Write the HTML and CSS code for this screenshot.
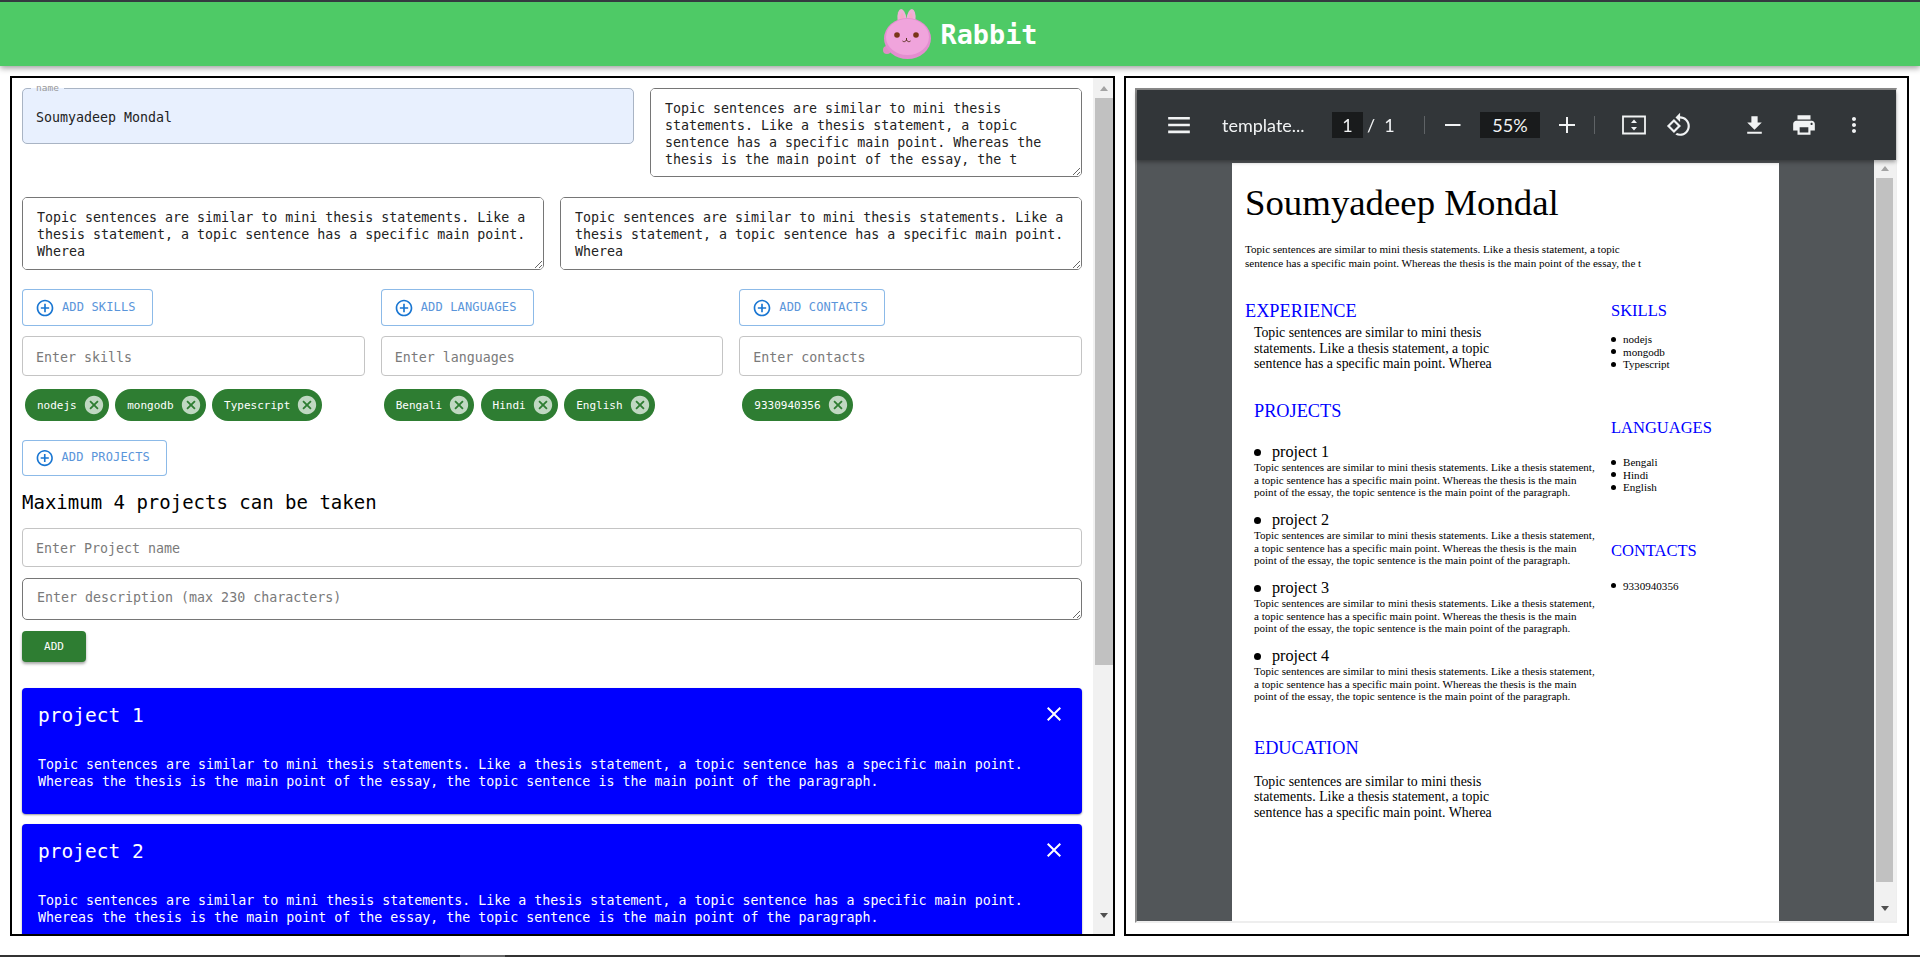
FILE: index.html
```html
<!DOCTYPE html>
<html lang="en">
<head>
    <meta charset="UTF-8">
    <meta name="viewport" content="width=device-width, initial-scale=1.0">
    <title>Rabbit</title>
    <link rel="stylesheet" href="styles.css">
</head>
<body>

<header class="navbar">
    <svg class="logo" viewBox="0 0 50 54">
        <ellipse cx="19" cy="12" rx="4.500" ry="10" transform="rotate(-6 19 12)" fill="#eeb0d6"/>
        <ellipse cx="28" cy="12" rx="4.500" ry="10" transform="rotate(6 28 12)" fill="#eeb0d6"/>
        <ellipse cx="19" cy="13" rx="2" ry="7" fill="#f7a8c8"/>
        <ellipse cx="28" cy="13" rx="2" ry="7" fill="#f7a8c8"/>
        <circle cx="4" cy="43" r="4" fill="#e08cc6"/>
        <ellipse cx="24.500" cy="31.500" rx="23.500" ry="20.500" fill="#e48ed0"/>
        <ellipse cx="24.500" cy="30" rx="21.500" ry="18" fill="#f0a4dc"/>
        <circle cx="14" cy="28" r="2.800" fill="#7a3518"/>
        <circle cx="33" cy="28" r="2.800" fill="#7a3518"/>
        <path d="M23.500 31v2M23.500 33c-1 2-3 2-4 1M23.500 33c1 2 3 2 4 1" fill="none" stroke="#5c3020" stroke-width="1"/>
    </svg>
    <span class="brand">Rabbit</span>
</header>

<main class="workspace">
    <section class="panel panel-form">
        <div class="form-scroll">
            <div class="row-top">
                <fieldset class="name-field">
                    <legend>name</legend>
                    <input type="text" value="Soumyadeep Mondal">
                </fieldset>
                <textarea rows="4">Topic sentences are similar to mini thesis statements. Like a thesis statement, a topic sentence has a specific main point. Whereas the thesis is the main point of the essay, the t</textarea>
            </div>

            <div class="row-two">
                <textarea rows="3">Topic sentences are similar to mini thesis statements. Like a thesis statement, a topic sentence has a specific main point. Wherea</textarea>
                <textarea rows="3">Topic sentences are similar to mini thesis statements. Like a thesis statement, a topic sentence has a specific main point. Wherea</textarea>
            </div>

            <div class="row-three">
                <div class="col">
                    <button class="btn-outline">
                        <svg viewBox="0 0 24 24"><path d="M13 7h-2v4H7v2h4v4h2v-4h4v-2h-4V7zm-1-5C6.49 2 2 6.49 2 12s4.49 10 10 10 10-4.49 10-10S17.51 2 12 2zm0 18c-4.41 0-8-3.59-8-8s3.59-8 8-8 8 3.59 8 8-3.59 8-8 8z"/></svg>
                        Add skills
                    </button>
                    <input class="field" type="text" placeholder="Enter skills">
                    <div class="chips">
                        <span class="chip">nodejs<svg viewBox="0 0 24 24"><path d="M12 2C6.47 2 2 6.47 2 12s4.47 10 10 10 10-4.47 10-10S17.53 2 12 2zm5 13.59L15.59 17 12 13.41 8.41 17 7 15.59 10.59 12 7 8.41 8.41 7 12 10.59 15.59 7 17 8.41 13.41 12 17 15.59z"/></svg></span>
                        <span class="chip">mongodb<svg viewBox="0 0 24 24"><path d="M12 2C6.47 2 2 6.47 2 12s4.47 10 10 10 10-4.47 10-10S17.53 2 12 2zm5 13.59L15.59 17 12 13.41 8.41 17 7 15.59 10.59 12 7 8.41 8.41 7 12 10.59 15.59 7 17 8.41 13.41 12 17 15.59z"/></svg></span>
                        <span class="chip">Typescript<svg viewBox="0 0 24 24"><path d="M12 2C6.47 2 2 6.47 2 12s4.47 10 10 10 10-4.47 10-10S17.53 2 12 2zm5 13.59L15.59 17 12 13.41 8.41 17 7 15.59 10.59 12 7 8.41 8.41 7 12 10.59 15.59 7 17 8.41 13.41 12 17 15.59z"/></svg></span>
                    </div>
                </div>
                <div class="col">
                    <button class="btn-outline">
                        <svg viewBox="0 0 24 24"><path d="M13 7h-2v4H7v2h4v4h2v-4h4v-2h-4V7zm-1-5C6.49 2 2 6.49 2 12s4.49 10 10 10 10-4.49 10-10S17.51 2 12 2zm0 18c-4.41 0-8-3.59-8-8s3.59-8 8-8 8 3.59 8 8-3.59 8-8 8z"/></svg>
                        Add languages
                    </button>
                    <input class="field" type="text" placeholder="Enter languages">
                    <div class="chips">
                        <span class="chip">Bengali<svg viewBox="0 0 24 24"><path d="M12 2C6.47 2 2 6.47 2 12s4.47 10 10 10 10-4.47 10-10S17.53 2 12 2zm5 13.59L15.59 17 12 13.41 8.41 17 7 15.59 10.59 12 7 8.41 8.41 7 12 10.59 15.59 7 17 8.41 13.41 12 17 15.59z"/></svg></span>
                        <span class="chip">Hindi<svg viewBox="0 0 24 24"><path d="M12 2C6.47 2 2 6.47 2 12s4.47 10 10 10 10-4.47 10-10S17.53 2 12 2zm5 13.59L15.59 17 12 13.41 8.41 17 7 15.59 10.59 12 7 8.41 8.41 7 12 10.59 15.59 7 17 8.41 13.41 12 17 15.59z"/></svg></span>
                        <span class="chip">English<svg viewBox="0 0 24 24"><path d="M12 2C6.47 2 2 6.47 2 12s4.47 10 10 10 10-4.47 10-10S17.53 2 12 2zm5 13.59L15.59 17 12 13.41 8.41 17 7 15.59 10.59 12 7 8.41 8.41 7 12 10.59 15.59 7 17 8.41 13.41 12 17 15.59z"/></svg></span>
                    </div>
                </div>
                <div class="col">
                    <button class="btn-outline">
                        <svg viewBox="0 0 24 24"><path d="M13 7h-2v4H7v2h4v4h2v-4h4v-2h-4V7zm-1-5C6.49 2 2 6.49 2 12s4.49 10 10 10 10-4.49 10-10S17.51 2 12 2zm0 18c-4.41 0-8-3.59-8-8s3.59-8 8-8 8 3.59 8 8-3.59 8-8 8z"/></svg>
                        Add contacts
                    </button>
                    <input class="field" type="text" placeholder="Enter contacts">
                    <div class="chips">
                        <span class="chip">9330940356<svg viewBox="0 0 24 24"><path d="M12 2C6.47 2 2 6.47 2 12s4.47 10 10 10 10-4.47 10-10S17.53 2 12 2zm5 13.59L15.59 17 12 13.41 8.41 17 7 15.59 10.59 12 7 8.41 8.41 7 12 10.59 15.59 7 17 8.41 13.41 12 17 15.59z"/></svg></span>
                    </div>
                </div>
            </div>

            <button class="btn-outline btn-projects">
                <svg viewBox="0 0 24 24"><path d="M13 7h-2v4H7v2h4v4h2v-4h4v-2h-4V7zm-1-5C6.49 2 2 6.49 2 12s4.49 10 10 10 10-4.49 10-10S17.51 2 12 2zm0 18c-4.41 0-8-3.59-8-8s3.59-8 8-8 8 3.59 8 8-3.59 8-8 8z"/></svg>
                Add projects
            </button>
            <h3 class="max-note">Maximum 4 projects can be taken</h3>
            <input class="field field-project" type="text" placeholder="Enter Project name">
            <textarea class="desc-input" rows="1" placeholder="Enter description (max 230 characters)"></textarea>
            <button class="btn-add">Add</button>

            <div class="card">
                <div class="card-head">
                    <span>project 1</span>
                    <svg viewBox="0 0 24 24"><path d="M19 6.41 17.59 5 12 10.59 6.41 5 5 6.41 10.59 12 5 17.59 6.41 19 12 13.41 17.59 19 19 17.59 13.41 12z"/></svg>
                </div>
                <p>Topic sentences are similar to mini thesis statements. Like a thesis statement, a topic sentence has a specific main point. Whereas the thesis is the main point of the essay, the topic sentence is the main point of the paragraph.</p>
            </div>
            <div class="card">
                <div class="card-head">
                    <span>project 2</span>
                    <svg viewBox="0 0 24 24"><path d="M19 6.41 17.59 5 12 10.59 6.41 5 5 6.41 10.59 12 5 17.59 6.41 19 12 13.41 17.59 19 19 17.59 13.41 12z"/></svg>
                </div>
                <p>Topic sentences are similar to mini thesis statements. Like a thesis statement, a topic sentence has a specific main point. Whereas the thesis is the main point of the essay, the topic sentence is the main point of the paragraph.</p>
            </div>
        </div>
        <div class="scrollbar form-bar">
            <i class="arrow-up"></i>
            <div class="thumb"></div>
            <i class="arrow-down"></i>
        </div>
    </section>

    <section class="panel panel-preview">
        <div class="viewer">
            <div class="toolbar">
                <svg class="tb-menu" viewBox="0 0 24 24"><path d="M2 4.500h20v2.400H2zM2 10.800h20v2.400H2zM2 17.100h20v2.400H2z"/></svg>
                <span class="tb-title">template...</span>
                <span class="tb-box tb-page">1</span>
                <span class="tb-count">/&nbsp;&nbsp;1</span>
                <span class="tb-sep sep-one"></span>
                <svg class="tb-minus" viewBox="0 0 16 16"><path d="M0 7h15.500v2H0z"/></svg>
                <span class="tb-box tb-zoom">55%</span>
                <svg class="tb-plus" viewBox="0 0 16 16"><path d="M7 0h2v7h7v2H9v7H7V9H0V7h7z"/></svg>
                <span class="tb-sep sep-two"></span>
                <svg class="tb-fit" viewBox="0 0 24 20"><path d="M1 1.500h22v17H1z" fill="none" stroke="#f1f3f4" stroke-width="1.800"/><path d="M12 4.500l3 3.500H9zM12 15.500l-3-3.500h6z"/></svg>
                <svg class="tb-rotate" viewBox="0 0 24 24"><path d="M7.340 6.410L.86 12.900l6.490 6.480 6.490-6.480-6.500-6.490zM3.690 12.900l3.660-3.660L11 12.900l-3.660 3.660-3.650-3.660zm15.670-6.260C17.610 4.880 15.300 4 13 4V.76L8.760 5 13 9.240V6c1.790 0 3.580.68 4.950 2.050 2.730 2.730 2.730 7.170 0 9.900C16.580 19.320 14.790 20 13 20c-.97 0-1.940-.21-2.840-.61l-1.490 1.490C10.020 21.620 11.510 22 13 22c2.300 0 4.610-.88 6.360-2.640 3.520-3.510 3.520-9.210 0-12.720z"/></svg>
                <svg class="tb-download" viewBox="0 0 24 24"><path d="M19 9h-4V3H9v6H5l7 7 7-7zM5 18v2h14v-2H5z"/></svg>
                <svg class="tb-print" viewBox="0 0 24 24"><path d="M19 8H5c-1.660 0-3 1.340-3 3v6h4v4h12v-4h4v-6c0-1.660-1.340-3-3-3zm-3 11H8v-5h8v5zm3-7c-.55 0-1-.45-1-1s.45-1 1-1 1 .45 1 1-.45 1-1 1zm-1-9H6v4h12V3z"/></svg>
                <svg class="tb-more" viewBox="0 0 24 24"><path d="M12 8c1.100 0 2-.9 2-2s-.9-2-2-2-2 .9-2 2 .9 2 2 2zm0 2c-1.100 0-2 .9-2 2s.9 2 2 2 2-.9 2-2-.9-2-2-2zm0 6c-1.100 0-2 .9-2 2s.9 2 2 2 2-.9 2-2-.9-2-2-2z"/></svg>
            </div>
            <div class="viewer-body">
                <div class="pages">
                    <article class="pdf-page">
                        <h1>Soumyadeep Mondal</h1>
                        <p class="pdf-intro">Topic sentences are similar to mini thesis statements. Like a thesis statement, a topic sentence has a specific main point. Whereas the thesis is the main point of the essay, the t</p>
                        <div class="pdf-cols">
                            <div class="pdf-main">
                                <h2>EXPERIENCE</h2>
                                <p class="pdf-body">Topic sentences are similar to mini thesis statements. Like a thesis statement, a topic sentence has a specific main point. Wherea</p>
                                <h2 class="pdf-projects">PROJECTS</h2>
                                <ul class="project-list">
                                    <li><b>project 1</b><p>Topic sentences are similar to mini thesis statements. Like a thesis statement, a topic sentence has a specific main point. Whereas the thesis is the main point of the essay, the topic sentence is the main point of the paragraph.</p></li>
                                    <li><b>project 2</b><p>Topic sentences are similar to mini thesis statements. Like a thesis statement, a topic sentence has a specific main point. Whereas the thesis is the main point of the essay, the topic sentence is the main point of the paragraph.</p></li>
                                    <li><b>project 3</b><p>Topic sentences are similar to mini thesis statements. Like a thesis statement, a topic sentence has a specific main point. Whereas the thesis is the main point of the essay, the topic sentence is the main point of the paragraph.</p></li>
                                    <li><b>project 4</b><p>Topic sentences are similar to mini thesis statements. Like a thesis statement, a topic sentence has a specific main point. Whereas the thesis is the main point of the essay, the topic sentence is the main point of the paragraph.</p></li>
                                </ul>
                                <h2 class="pdf-education">EDUCATION</h2>
                                <p class="pdf-body">Topic sentences are similar to mini thesis statements. Like a thesis statement, a topic sentence has a specific main point. Wherea</p>
                            </div>
                            <aside class="pdf-side">
                                <h2>SKILLS</h2>
                                <ul class="list-skills">
                                    <li>nodejs</li>
                                    <li>mongodb</li>
                                    <li>Typescript</li>
                                </ul>
                                <h2 class="side-languages">LANGUAGES</h2>
                                <ul>
                                    <li>Bengali</li>
                                    <li>Hindi</li>
                                    <li>English</li>
                                </ul>
                                <h2 class="side-contacts">CONTACTS</h2>
                                <ul>
                                    <li>9330940356</li>
                                </ul>
                            </aside>
                        </div>
                    </article>
                </div>
                <div class="scrollbar pdf-bar">
                    <i class="arrow-up"></i>
                    <div class="thumb"></div>
                    <i class="arrow-down"></i>
                </div>
            </div>
        </div>
    </section>
</main>

<footer class="taskbar"><span></span></footer>

</body>
</html>
```

FILE: styles.css
```css
* {
    box-sizing: border-box;
}
html, body {
    margin: 0;
    height: 957px;
    overflow: hidden;
}
body {
    font-family: "DejaVu Sans Mono", monospace;
    background-color: #fff;
    font-size: 13.3px;
    border-top: 2px solid #343a40;
}
.navbar {
    height: 64px;
    background-color: #4eca66;
    box-shadow: 0 2px 6px rgba(0, 0, 0, 0.4);
    display: flex;
    justify-content: center;
    align-items: center;
}
.logo {
    width: 50px;
    height: 54px;
    margin-right: 8px;
}
.brand {
    color: white;
    font-size: 26.8px;
    font-weight: bold;
}
.workspace {
    display: flex;
    gap: 9px;
    height: 860px;
    margin-top: 10px;
    padding-left: 10px;
}
.panel {
    border: 2px solid #000;
    height: 860px;
    display: flex;
    background: white;
}
.panel-form {
    width: 1105px;
}
.panel-preview {
    width: 785px;
    padding: 10px 10px 11px 9px;
}

/* form side */
.form-scroll {
    width: 1081px;
    height: 856px;
    padding: 10px 11px 0 10px;
    overflow: hidden;
    flex: none;
}
input, textarea, button {
    font-family: "DejaVu Sans Mono", monospace;
    font-size: 13.3px;
}
textarea {
    display: block;
    width: 100%;
    padding: 11px 14px;
    line-height: 17px;
    border: 1px solid #767676;
    border-radius: 5px;
    color: #222;
    resize: both;
    outline: none;
}
textarea::placeholder, input::placeholder {
    color: #7a7a7a;
}
.row-top {
    display: grid;
    grid-template-columns: 612px 432px;
    gap: 16px;
    align-items: start;
}
.row-top textarea {
    height: 89px;
}
.name-field {
    margin: -6px 0 0;
    padding: 0;
    height: 62px;
    border: 1px solid #a9b4c4;
    border-radius: 5px;
    background: #e8f0fe;
    display: block;
}
.name-field legend {
    margin-left: 8px;
    padding: 0 5px;
    font-size: 9.5px;
    line-height: 12px;
    color: #9a9a9a;
}
.name-field input {
    width: 100%;
    height: 46px;
    border: none;
    background: transparent;
    padding: 0 13px;
    color: #222;
    outline: none;
}
.row-two {
    display: grid;
    grid-template-columns: 1fr 1fr;
    gap: 16px;
    margin-top: 20px;
}
.row-two textarea {
    height: 73px;
}
.row-three {
    display: grid;
    grid-template-columns: repeat(3, 1fr);
    gap: 16px;
    margin-top: 19px;
}
.col {
    display: flex;
    flex-direction: column;
    align-items: flex-start;
}
.btn-outline {
    display: inline-flex;
    align-items: center;
    gap: 7px;
    height: 37px;
    padding: 0 16px 2px 12px;
    background: white;
    border: 1px solid rgba(25, 118, 210, 0.5);
    border-radius: 4px;
    color: #5a95da;
    font-size: 12px;
    letter-spacing: 0.15px;
    text-transform: uppercase;
}
.btn-outline svg {
    width: 20px;
    height: 20px;
    margin-top: 2px;
    fill: #1976d2;
}
.field {
    width: 100%;
    height: 40px;
    margin-top: 10px;
    padding: 2px 13px 0;
    border: 1px solid #c4c4c4;
    border-radius: 4px;
    outline: none;
}
.chips {
    display: flex;
    gap: 6.500px;
    margin: 13px 0 0 3px;
}
.chip {
    display: flex;
    align-items: center;
    height: 32px;
    padding: 0 4px 0 12px;
    border-radius: 16px;
    background-color: #2e7d32;
    color: white;
    font-size: 11px;
}
.chip svg {
    width: 22px;
    height: 22px;
    margin-left: 6px;
    fill: rgba(255, 255, 255, 0.7);
}
.btn-projects {
    display: flex;
    width: 145px;
    height: 36px;
    margin-top: 19px;
    white-space: nowrap;
}
.max-note {
    margin: 14px 0 0;
    font-size: 19px;
    font-weight: normal;
    line-height: 24px;
    color: #000;
}
.field-project {
    display: block;
    margin-top: 14px;
    height: 39px;
}
.desc-input {
    height: 42px;
    margin-top: 11px;
    padding-top: 10px;
}
.btn-add {
    display: block;
    width: 64px;
    height: 31px;
    margin-top: 11px;
    border: none;
    border-radius: 4px;
    background-color: #2e7d32;
    color: white;
    font-size: 11px;
    text-transform: uppercase;
    box-shadow: 0 2px 3px rgba(0, 0, 0, 0.35);
}
.card {
    height: 126px;
    margin-top: 10px;
    padding: 0 16px;
    background-color: #0000ff;
    color: white;
    border-radius: 4px;
    box-shadow: 0 1px 2px rgba(0, 0, 0, 0.4);
}
.btn-add + .card {
    margin-top: 26px;
}
.card-head {
    display: flex;
    justify-content: space-between;
    align-items: center;
    height: 54px;
    font-size: 19.5px;
}
.card-head svg {
    width: 24px;
    height: 24px;
    margin-top: -3px;
    fill: white;
}
.card p {
    margin: 14px 0 0;
    line-height: 17px;
}

/* fake scrollbars, screenshot has the classic ones */
.scrollbar {
    display: flex;
    flex-direction: column;
    align-items: center;
    background-color: #f1f1f1;
    flex: none;
}
.thumb {
    background-color: #c1c1c1;
    width: 100%;
}
.arrow-up, .arrow-down {
    display: block;
    width: 0;
    height: 0;
    border-left: 4.500px solid transparent;
    border-right: 4.500px solid transparent;
}
.arrow-up {
    border-bottom: 5px solid #a3a3a3;
}
.arrow-down {
    border-top: 5px solid #505050;
}
.form-bar {
    width: 20px;
    padding: 8px 0 0 2px;
}
.form-bar .thumb {
    height: 567px;
    margin-top: 7px;
}
.form-bar .arrow-down {
    margin-top: 248px;
}

/* pdf viewer */
.viewer {
    width: 763px;
    height: 835px;
    border-top: 2px solid #8a8a8a;
    border-left: 2px solid #8a8a8a;
    border-right: 1px solid #eee;
    border-bottom: 2px solid #eee;
    display: flex;
    flex-direction: column;
    background: #525659;
}
.toolbar {
    height: 70px;
    flex: none;
    display: flex;
    align-items: center;
    background-color: #323639;
    color: #f1f3f4;
    font-family: Lato, sans-serif;
    box-shadow: 0 2px 4px rgba(0, 0, 0, 0.35);
    position: relative;
    z-index: 1;
}
.toolbar svg {
    fill: #f1f3f4;
    flex: none;
}
.tb-menu {
    width: 26px;
    height: 26px;
    margin-left: 29px;
}
.tb-title {
    margin-left: 30px;
    width: 110px;
    font-size: 18px;
}
.tb-box {
    display: flex;
    align-items: center;
    justify-content: center;
    height: 26px;
    background-color: #191b1c;
    font-size: 18px;
}
.tb-page {
    width: 31px;
}
.tb-count {
    margin-left: 4px;
    width: 57px;
    font-size: 18px;
}
.tb-sep {
    width: 1px;
    height: 18px;
    background-color: #5f6366;
}
.tb-minus {
    width: 16px;
    height: 16px;
    margin-left: 20px;
}
.tb-zoom {
    width: 60px;
    margin-left: 19px;
}
.tb-plus {
    width: 16px;
    height: 16px;
    margin-left: 19px;
}
.sep-two {
    margin-left: 19px;
}
.tb-fit {
    width: 24px;
    height: 20px;
    margin-left: 27px;
}
.tb-rotate {
    width: 26px;
    height: 26px;
    margin-left: 20px;
}
.tb-download {
    width: 25px;
    height: 25px;
    margin-left: 50px;
}
.tb-print {
    width: 26px;
    height: 26px;
    margin-left: 24px;
}
.tb-more {
    width: 24px;
    height: 24px;
    margin-left: 25px;
}
.viewer-body {
    flex: 1;
    min-height: 0;
    display: flex;
}
.pages {
    flex: 1;
    display: flex;
    justify-content: center;
    padding-top: 3px;
    overflow: hidden;
}
.pdf-page {
    width: 547px;
    height: 100%;
    padding: 19px 0 0 13px;
    background: white;
    font-family: "Liberation Serif", serif;
    color: #000;
    overflow: hidden;
}
.pdf-page h1 {
    margin: 0;
    font-size: 36.800px;
    font-weight: normal;
    line-height: 42px;
}
.pdf-intro {
    width: 402px;
    margin: 19px 0 0;
    font-size: 11.100px;
    line-height: 13.500px;
}
.pdf-cols {
    display: flex;
    margin-top: 31px;
}
.pdf-main {
    width: 366px;
    flex: none;
}
.pdf-page h2 {
    margin: 0;
    font-size: 18.300px;
    font-weight: normal;
    line-height: 21px;
    color: #0000ff;
}
.pdf-body {
    width: 252px;
    margin: 3px 0 0 9px;
    font-size: 13.800px;
    line-height: 15.700px;
}
.pdf-main .pdf-projects {
    margin: 29px 0 0 9px;
}
.project-list {
    list-style: none;
    width: 346px;
    margin: 21px 0 0 9px;
    padding: 0;
}
.project-list li {
    margin-bottom: 12.500px;
}
.project-list b {
    display: flex;
    align-items: center;
    font-size: 16.200px;
    font-weight: normal;
    line-height: 18px;
}
.project-list b::before {
    content: "";
    width: 7px;
    height: 7px;
    margin-right: 11px;
    border-radius: 50%;
    background: #000;
}
.project-list p {
    margin: 0;
    font-size: 11.050px;
    line-height: 12.500px;
}
.pdf-main .pdf-education {
    margin: 35px 0 0 9px;
}
.pdf-education + .pdf-body {
    margin-top: 15px;
}
.pdf-side h2 {
    font-size: 16.500px;
    line-height: 20px;
}
.pdf-side ul {
    list-style: none;
    margin: 18.500px 0 0;
    padding: 0;
    font-size: 11.100px;
    line-height: 12.500px;
}
.pdf-side .list-skills {
    margin-top: 12px;
}
.pdf-side li {
    display: flex;
    align-items: center;
}
.pdf-side li::before {
    content: "";
    width: 5px;
    height: 5px;
    margin-right: 7px;
    border-radius: 50%;
    background: #000;
}
.pdf-side .side-languages {
    margin-top: 47px;
}
.pdf-side .side-contacts {
    margin-top: 47.500px;
}
.pdf-bar {
    width: 22px;
    padding: 6px 3px 0 2px;
}
.pdf-bar .thumb {
    height: 704px;
    margin-top: 7px;
}
.pdf-bar .arrow-down {
    margin-top: 24px;
}
.taskbar {
    height: 2px;
    margin-top: 19px;
    background-color: #333;
}
.taskbar span {
    display: block;
    width: 45px;
    height: 2px;
    margin-left: 460px;
    background-color: #666;
}
```
